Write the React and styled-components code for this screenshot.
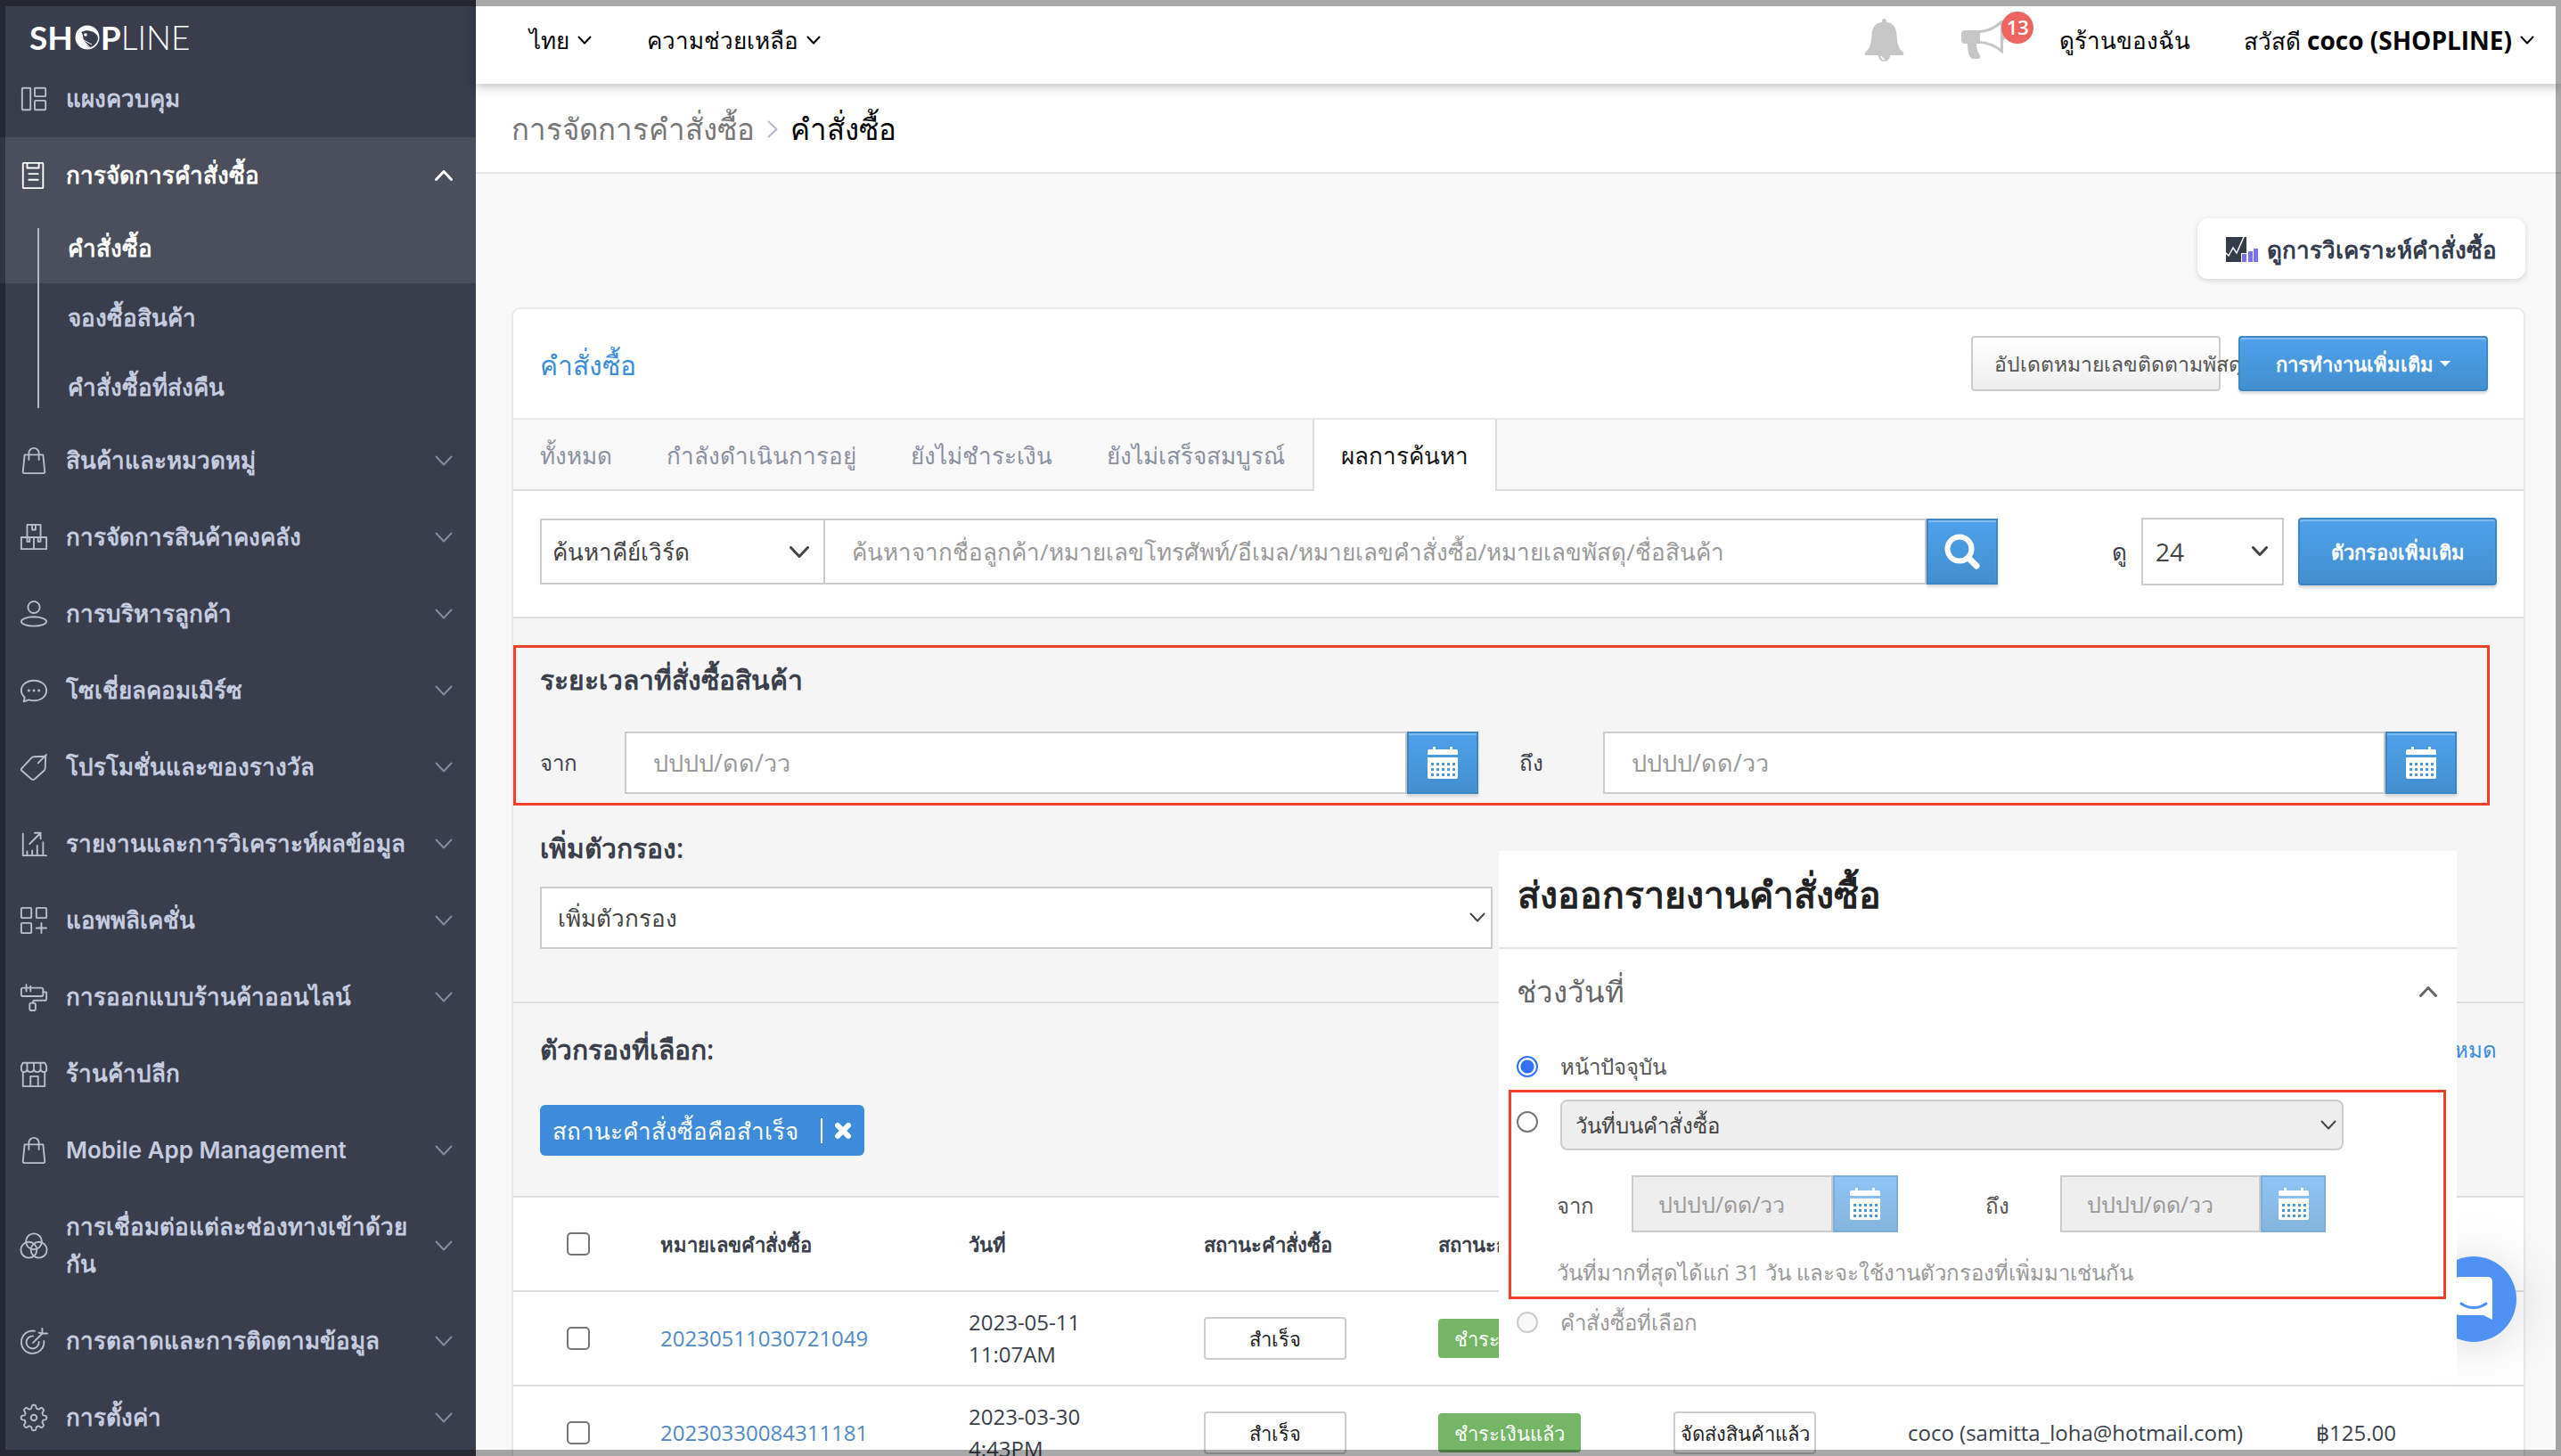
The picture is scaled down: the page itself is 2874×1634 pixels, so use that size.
import React from "react";
import styled, { createGlobalStyle, css } from "styled-components";

const GlobalStyle = createGlobalStyle`
  *, *::before, *::after { box-sizing: border-box; }
  body {
    margin: 0;
    background: #f8f8f8;
    color: #3a3f4b;
    font-family: "Open Sans", "Noto Sans", sans-serif;
    font-size: 24px;
    line-height: 36px;
  }
  button, input, select { font: inherit; color: inherit; margin: 0; }
  a { color: inherit; text-decoration: none; }
  h1, h2, h3, p { margin: 0; }
`;

const Shell = styled.div`
  position: relative;
  display: flex;
  height: 100vh;
  overflow: hidden;
`;

const WindowEdge = styled.div`
  position: absolute;
  inset: 0;
  border: 6px solid rgba(0, 0, 0, 0.34);
  border-width: 7px 6px;
  pointer-events: none;
  z-index: 10;
`;

/* ---------- icons ---------- */

const Stroke = styled.svg`
  flex: none;
  display: block;
  fill: none;
  stroke: currentColor;
  stroke-linecap: round;
  stroke-linejoin: round;
`;

function Chevron({ dir = "down", w = 20, h = 12, weight = 2 }) {
  const d = {
    down: `M1.5 1.5L${w / 2} ${h - 1.5}L${w - 1.5} 1.5`,
    up: `M1.5 ${h - 1.5}L${w / 2} 1.5L${w - 1.5} ${h - 1.5}`,
    right: `M1.5 1.5L${w - 1.5} ${h / 2}L1.5 ${h - 1.5}`,
  }[dir];
  return (
    <Stroke width={w} height={h} viewBox={`0 0 ${w} ${h}`} strokeWidth={weight} aria-hidden="true">
      <path d={d} />
    </Stroke>
  );
}

function gearPath() {
  const pts = [];
  for (let i = 0; i < 160; i++) {
    const a = (i / 160) * Math.PI * 2;
    const r = 13.2 + 2 * Math.tanh(2.2 * Math.cos(8 * a));
    pts.push(`${(16 + r * Math.cos(a)).toFixed(2)} ${(16 + r * Math.sin(a)).toFixed(2)}`);
  }
  return `M${pts.join("L")}Z`;
}

const menuShapes = {
  dashboard: (
    <>
      <rect x="2" y="3" width="10" height="26" rx="1" />
      <rect x="17" y="3" width="13" height="10" rx="1" />
      <rect x="17" y="18" width="13" height="11" rx="1" />
    </>
  ),
  orders: (
    <>
      <rect x="3" y="1" width="24" height="30" rx="1" />
      <path d="M8 1v6h14V1M10 14h11M10 21h11" />
    </>
  ),
  bag: (
    <>
      <path d="M5 9h22l2 20a1.5 1.5 0 0 1-1.500 2h-23A1.500 1.500 0 0 1 3 29z" />
      <path d="M10 15V7a6 6 0 0 1 12 0v8" />
    </>
  ),
  stock: (
    <>
      <path d="M8 16V1h16v15M1 16h30v14H1zM16 16v14M14 1v6h4V1M8 16v5h3v-5M21 16v5h3v-5" />
    </>
  ),
  person: (
    <>
      <circle cx="16" cy="8" r="7" />
      <ellipse cx="16" cy="25" rx="15" ry="5.500" />
    </>
  ),
  chat: (
    <>
      <path d="M5 24c-2.500-2.200-4-5-4-8C1 9 7.500 4 16 4s15 5 15 12-6.500 12-15 12c-2.500 0-4-.3-6-1l-6 2z" />
      <path d="M10 16h.1M16 16h.1M22 16h.1" strokeWidth="3" />
    </>
  ),
  tag: (
    <>
      <path d="M1 18L13 5c1-1 2-1.500 3-1.500L30 3l-.5 14c0 1-.5 2-1.200 3L17 30c-1.500 1-3 1-4 0L1.500 20c-.6-.7-.8-1.400-.5-2z" />
      <path d="M21 11L31 1" />
    </>
  ),
  report: (
    <>
      <path d="M3 4v26h28M8 30v-5M14 30v-6M20 30V18M27 30V14M11 16L24 3M17 3h7v7" />
    </>
  ),
  apps: (
    <>
      <rect x="1" y="1" width="12" height="12" rx="1" />
      <rect x="19" y="1" width="12" height="12" rx="1" />
      <rect x="1" y="19" width="12" height="12" rx="1" />
      <path d="M25 19v12M19 25h12" />
    </>
  ),
  roller: (
    <>
      <rect x="1" y="5" width="26" height="10" rx="2" />
      <path d="M7 1v8M12 3v6M27 10h4v8c0 1-.5 2-2 2H17c-1.500 0-2 .5-2 2v1" />
      <rect x="11" y="23" width="7" height="9" rx="2" />
    </>
  ),
  store: (
    <>
      <path d="M3 14v17h26V14M12 31V19h9v12M3 3h26l2 4v4c0 2-1 3-3 3s-3.500-1-4-3c-.5 2-2 3-4 3s-3.500-1-4-3c-.5 2-2 3-4 3s-3.500-1-4-3c-.5 2-2 3-3.500 3S1 13 1 11V7zM8 11V4M16 11V4M24 11V4" />
    </>
  ),
  venn: (
    <>
      <circle cx="16" cy="11" r="9.500" />
      <circle cx="10" cy="21" r="9.500" />
      <circle cx="22" cy="21" r="9.500" />
    </>
  ),
  target: (
    <>
      <path d="M17 4A13.500 13.500 0 1 0 28 16M15 10a7.500 7.500 0 1 0 7 7M15 18L26 7M26 7V1M26 7h6M26 7l-4-1" />
    </>
  ),
  gear: (
    <>
      <path d={gearPath()} />
      <circle cx="16" cy="16" r="3.500" />
    </>
  ),
};

function MenuIcon({ name }) {
  return (
    <Stroke width="32" height="32" viewBox="-1 -1 34 34" strokeWidth="2" aria-hidden="true">
      {menuShapes[name]}
    </Stroke>
  );
}

function CalendarIcon() {
  const holes = [];
  for (let r = 0; r < 3; r++)
    for (let c = 0; c < 5; c++)
      holes.push(<rect key={`${r}-${c}`} x={4 + c * 6} y={18 + r * 6} width="3" height="3" fill="#4a97dc" />);
  return (
    <svg width="34" height="36" viewBox="0 0 34 36" aria-hidden="true">
      <path fill="#fff" d="M6 0h3v3h16V0h3v3h4a2 2 0 0 1 2 2v4H0V5a2 2 0 0 1 2-2h4zM0 12h34v22a2 2 0 0 1-2 2H2a2 2 0 0 1-2-2z" />
      {holes}
    </svg>
  );
}

function SearchIcon() {
  return (
    <Stroke width="40" height="40" viewBox="0 0 40 40" strokeWidth="6" aria-hidden="true">
      <circle cx="17" cy="17" r="13.500" />
      <path d="M27 27l9 9" strokeWidth="7" />
    </Stroke>
  );
}

function BellIcon() {
  return (
    <svg width="45" height="48" viewBox="0 0 45 48" fill="#c6c6c6" aria-hidden="true">
      <path d="M22.500 0c1.800 0 2.600 1.500 2.600 3.800C33 5 36 10 36.500 18c.5 9 2 15 5.500 18 2.500 2 3.500 5 1 5H2c-2.500 0-1.500-3 1-5 3.500-3 5-9 5.500-18C9 10 12 5 19.900 3.800 19.900 1.500 20.700 0 22.500 0z" />
      <path d="M16 41h13c0 4-2.500 7-6.500 7S16 45 16 41z" />
      <path d="M19 42c.5 2 2 3.500 4 3.800" stroke="#fff" strokeWidth="1.500" fill="none" />
    </svg>
  );
}

function HornIcon() {
  return (
    <svg width="50" height="44" viewBox="0 0 50 44" fill="#c6c6c6" aria-hidden="true">
      <path d="M4 11h17v15H4c-3 0-4-2-4-4v-7c0-2 1-4 4-4z" />
      <path d="M21 12.500C31 12 39 7 45.500 1.500v33C39 29 31 25 21 24.500" fill="none" stroke="#c6c6c6" strokeWidth="3" />
      <path d="M46 14c3 0 4 2 4 4s-1 4-4 4zM7 26h10c0 5 1 9 4 13 1 3-1 4-4 4h-4c-4 0-6-8-6-17z" />
    </svg>
  );
}

function AnalyticsIcon() {
  return (
    <svg width="37" height="28" viewBox="0 0 37 28" aria-hidden="true">
      <path fill="#343c4a" d="M0 0h23v18h-6v10H0z" />
      <path d="M0 18l3 3 5-9 4 6 8-18" fill="none" stroke="#fff" strokeWidth="1.500" />
      <path fill="#7b70f3" d="M18 19h5v9h-5zM25 16h5v12h-5zM31 13h5v15h-5z" />
    </svg>
  );
}

/* ---------- sidebar ---------- */

const Sidebar = styled.aside`
  flex: none;
  width: 534px;
  background: #393d4c;
  color: #c5cce0;
  font-family: Inter, "Noto Sans", sans-serif;
  font-size: 26px;
  font-weight: 600;
  line-height: 42px;
`;

const Brand = styled.a`
  display: flex;
  align-items: center;
  height: 68px;
  padding: 16px 0 0 33px;
  color: #fff;
  font: 300 37px/52px Lato, sans-serif;
  & > svg { margin: 0 1px 0 2px; }
`;

const BrandStrong = styled.span`
  font-weight: 700;
`;

const MenuRow = styled.a`
  display: flex;
  align-items: center;
  min-height: 86px;
  padding: 22px 26px 22px 22px;
  color: ${(p) => (p.$active ? "#fff" : "inherit")};
  background: ${(p) => (p.$active ? "#4b4f5c" : "transparent")};
  & > svg:first-child { color: ${(p) => (p.$active ? "#fff" : "#b9bfcc")}; }
  & > svg:last-child { color: ${(p) => (p.$active ? "#fff" : "#858ca0")}; }
`;

const MenuText = styled.span`
  flex: 1;
  margin: 0 10px 0 20px;
`;

const SubMenu = styled.div`
  position: relative;
  &::before {
    content: "";
    position: absolute;
    left: 42px;
    top: 16px;
    bottom: 16px;
    width: 2px;
    background: #b4bac8;
  }
`;

const SubRow = styled.a`
  display: flex;
  align-items: center;
  height: 78px;
  padding-left: 76px;
  color: ${(p) => (p.$active ? "#fff" : "inherit")};
  background: ${(p) => (p.$active ? "#4b4f5c" : "transparent")};
`;

const menu = [
  ["bag", "สินค้าและหมวดหมู่", true],
  ["stock", "การจัดการสินค้าคงคลัง", true],
  ["person", "การบริหารลูกค้า", true],
  ["chat", "โซเชี่ยลคอมเมิร์ซ", true],
  ["tag", "โปรโมชั่นและของรางวัล", true],
  ["report", "รายงานและการวิเคราะห์ผลข้อมูล", true],
  ["apps", "แอพพลิเคชั่น", true],
  ["roller", "การออกแบบร้านค้าออนไลน์", true],
  ["store", "ร้านค้าปลีก", false],
  ["bag", "Mobile App Management", true],
  ["venn", "การเชื่อมต่อแต่ละช่องทางเข้าด้วยกัน", true],
  ["target", "การตลาดและการติดตามข้อมูล", true],
  ["gear", "การตั้งค่า", true],
];

function SideMenu() {
  return (
    <Sidebar>
      <Brand href="#" aria-label="SHOPLINE">
        <BrandStrong>SH</BrandStrong>
        <svg width="28" height="28" viewBox="0 0 28 28" aria-hidden="true">
          <circle cx="14" cy="14" r="13.500" fill="#fff" />
          <path d="M7 8c5-2 8-2 11-1 4 1 8 4 8 8-.5 5-4 9-9.500 10.500-3-3-6-6-7-10C9 12 9 10 7 8z" fill="#393d4c" />
          <circle cx="12" cy="11" r="1.800" fill="#fff" />
          <path d="M10 17l9 5M10 18l7 7M10 19l4 7" stroke="#fff" strokeWidth="1" />
        </svg>
        <BrandStrong>P</BrandStrong>
        <span>LINE</span>
      </Brand>
      <nav>
        <MenuRow href="#"><MenuIcon name="dashboard" /><MenuText>แผงควบคุม</MenuText></MenuRow>
        <MenuRow href="#" $active><MenuIcon name="orders" /><MenuText>การจัดการคำสั่งซื้อ</MenuText><Chevron dir="up" weight={3} /></MenuRow>
        <SubMenu>
          <SubRow href="#" $active>คำสั่งซื้อ</SubRow>
          <SubRow href="#">จองซื้อสินค้า</SubRow>
          <SubRow href="#">คำสั่งซื้อที่ส่งคืน</SubRow>
        </SubMenu>
        {menu.map(([icon, label, opens]) => (
          <MenuRow href="#" key={label}>
            <MenuIcon name={icon} />
            <MenuText>{label}</MenuText>
            {opens && <Chevron />}
          </MenuRow>
        ))}
      </nav>
    </Sidebar>
  );
}

/* ---------- top bars ---------- */

const Main = styled.main`
  position: relative;
  flex: 1;
  min-width: 0;
`;

const TopBar = styled.header`
  position: relative;
  z-index: 1;
  display: flex;
  align-items: center;
  height: 94px;
  padding: 0 30px 4px 60px;
  background: #fff;
  box-shadow: 0 2px 12px rgba(0, 0, 0, 0.3);
  color: #000;
  font-size: 26px;
  font-weight: 500;
`;

const TopLink = styled.button`
  display: flex;
  align-items: center;
  gap: 9px;
  padding: 0;
  border: 0;
  background: none;
  white-space: nowrap;
  margin-left: ${(p) => p.$before || 0}px;
`;

const UserName = styled.b`
  font-size: 28px;
  font-weight: 700;
`;

const Spacer = styled.div`
  flex: 1;
`;

const IconButton = styled.button`
  position: relative;
  display: block;
  padding: 0;
  border: 0;
  background: none;
  line-height: 0;
  margin-right: ${(p) => p.$after}px;
`;

const Badge = styled.span`
  position: absolute;
  left: 45px;
  top: -10px;
  width: 36px;
  height: 36px;
  border-radius: 50%;
  background: #ec6561;
  color: #fff;
  font: 600 22px/34px "Open Sans", sans-serif;
  text-align: center;
`;

const Crumbs = styled.nav`
  display: flex;
  align-items: center;
  gap: 14px;
  height: 101px;
  padding: 2px 40px 0;
  background: #fff;
  border-bottom: 2px solid #e7e7e7;
  color: #777;
  font-size: 33px;
  line-height: 50px;
  & > svg { color: #b4bacb; }
`;

const CurrentCrumb = styled.strong`
  font-weight: 500;
  color: #000;
`;

/* ---------- order card ---------- */

const Content = styled.div`
  padding: 50px 40px;
`;

const AnalyticsButton = styled.button`
  display: flex;
  align-items: center;
  gap: 9px;
  height: 68px;
  margin: 0 0 32px auto;
  padding: 2px 32px 0;
  border: 0;
  border-radius: 12px;
  background: #fff;
  box-shadow: 0 2px 6px rgba(0, 0, 0, 0.14);
  color: #343c4e;
  font-size: 26px;
  font-weight: 600;
`;

const Card = styled.section`
  border: 2px solid #e7e7e7;
  border-radius: 10px;
  background: #fff;
`;

const CardHead = styled.div`
  display: flex;
  align-items: center;
  gap: 20px;
  height: 122px;
  padding: 0 40px 0 30px;
`;

const CardTitle = styled.h1`
  flex: 1;
  padding-top: 4px;
  color: #3b8cdb;
  font-size: 30px;
  font-weight: 500;
  line-height: 44px;
`;

const blueFace = css`
  border: 2px solid #3d86c6;
  background: linear-gradient(#4fa1eb, #428fce);
  box-shadow: inset 0 2px 1px rgba(255, 255, 255, 0.3), 0 3px 3px rgba(0, 0, 0, 0.14);
  color: #fff;
`;

const ActionButton = styled.button`
  position: relative;
  display: flex;
  align-items: center;
  justify-content: ${(p) => (p.$primary ? "center" : "flex-start")};
  gap: 7px;
  width: ${(p) => p.$width}px;
  height: ${(p) => p.$height}px;
  padding: 0 ${(p) => (p.$primary ? 10 : 24)}px;
  border: 2px solid #ccc;
  border-radius: 4px;
  background: linear-gradient(#fff, #eee);
  color: #555;
  font-size: 23px;
  white-space: nowrap;
  ${(p) =>
    p.$primary &&
    css`
      ${blueFace}
      font-size: 22px;
      font-weight: 600;
    `}
`;

const Caret = styled.span`
  border: 6px solid transparent;
  border-top-color: currentColor;
  border-bottom: 0;
`;

const Tabs = styled.div`
  display: flex;
  gap: 1px;
  height: 82px;
  border-top: 2px solid #e7e7e7;
  background: linear-gradient(#ddd, #ddd) bottom / 100% 2px no-repeat #f8f8f8;
`;

const Tab = styled.button`
  padding: 0 30px;
  border: 0;
  background: none;
  color: #8b90a0;
  font-size: 26px;
  font-weight: 500;
  white-space: nowrap;
  ${(p) =>
    p.$on &&
    css`
      border: solid #ddd;
      border-width: 0 2px;
      background: #fff;
      color: #111;
    `}
`;

const SearchRow = styled.form`
  display: flex;
  align-items: center;
  height: 143px;
  padding: 0 30px 6px;
  border-bottom: 2px solid #ddd;
`;

const Group = styled.div`
  display: flex;
  flex: 1;
  min-width: 0;
  height: ${(p) => p.$height}px;
`;

const SelectBox = styled.span`
  position: relative;
  display: block;
  flex: ${(p) => (p.$width ? "none" : 1)};
  width: ${(p) => (p.$width ? `${p.$width}px` : "auto")};
  height: ${(p) => p.$height}px;
  color: #444;
  & > svg {
    position: absolute;
    right: ${(p) => p.$inset || 8}px;
    top: calc(50% - 6px);
    pointer-events: none;
  }
`;

const Select = styled.select`
  appearance: none;
  width: 100%;
  height: 100%;
  padding: 0 ${(p) => p.$pad || 12}px;
  border: 2px solid #ccc;
  border-radius: ${(p) => (p.$off ? 8 : 0)}px;
  background: ${(p) => (p.$off ? "#eee" : "#fff")};
  color: inherit;
  font-size: ${(p) => p.$size || 26}px;
  font-weight: ${(p) => p.$weight || 400};
  opacity: 1;
`;

const TextInput = styled.input`
  flex: 1;
  min-width: 0;
  margin-left: ${(p) => (p.$joined ? -2 : 0)}px;
  padding: 0 ${(p) => p.$pad || 30}px;
  border: 2px solid #ccc;
  border-radius: 0;
  background: ${(p) => (p.disabled ? "#eee" : "#fff")};
  font-size: ${(p) => p.$size || 26}px;
  &::placeholder { color: #999; opacity: 1; }
`;

const AddonButton = styled.button`
  display: flex;
  align-items: center;
  justify-content: center;
  flex: none;
  width: ${(p) => p.$width || 80}px;
  padding: 0;
  ${blueFace}
  ${(p) =>
    p.disabled &&
    css`
      border-color: #7fabd8;
      background: linear-gradient(#8fc4f5, #84b5dd);
      box-shadow: none;
    `}
`;

const PerPage = styled.label`
  display: flex;
  align-items: center;
  gap: 16px;
  margin: 0 16px 0 128px;
  font-size: 26px;
`;

const FilterArea = styled.div`
  padding: 30px 0 0;
  height: ${(p) => p.$height}px;
  background: #f5f5f5;
  border-bottom: 2px solid #ddd;
`;

const FilterBlock = styled.div`
  padding: 0 30px;
`;

const Highlight = styled.div`
  border: 3px solid #ee4026;
`;

const DateRange = styled(Highlight)`
  height: 180px;
  margin-right: 38px;
  padding: 14px 34px 0 27px;
`;

const FilterTitle = styled.h2`
  font-size: 30px;
  font-weight: 600;
  line-height: 44px;
`;

const DateFields = styled.div`
  display: flex;
  align-items: center;
  margin-top: 36px;
`;

const DateLabel = styled.label`
  flex: none;
  width: ${(p) => p.$width}px;
  margin-left: ${(p) => p.$before || 0}px;
`;

const Chosen = styled.div`
  display: flex;
  justify-content: space-between;
  align-items: center;
`;

const BlueLink = styled.a`
  color: ${(p) => (p.$soft ? "#5089c6" : "#3b8cdb")};
`;

const FilterTag = styled.span`
  display: inline-flex;
  align-items: center;
  height: 57px;
  margin-top: 40px;
  padding: 0 14px;
  border-radius: 6px;
  background: #3e8cd9;
  color: #fff;
  font-size: 26px;
`;

const TagClose = styled.button`
  display: flex;
  align-items: center;
  height: 28px;
  margin-left: 25px;
  padding: 0 0 0 13px;
  border: 0;
  border-left: 2px solid #fff;
  background: none;
`;

const Table = styled.table`
  width: 100%;
  table-layout: fixed;
  border-collapse: separate;
  border-spacing: 0;
  th, td {
    height: 106px;
    padding: 0;
    border-bottom: 2px solid #ddd;
    text-align: left;
    white-space: nowrap;
  }
  th { font-size: 22px; font-weight: 600; }
  th:first-child, td:first-child { padding-left: 60px; }
`;

const Check = styled.input`
  appearance: none;
  display: block;
  width: 26px;
  height: 26px;
  border: 2px solid #767676;
  border-radius: 5px;
  background: #fff;
`;

const Status = styled.span`
  display: flex;
  align-items: center;
  justify-content: center;
  width: 160px;
  height: ${(p) => (p.$paid ? 44 : 48)}px;
  border: 2px solid ${(p) => (p.$paid ? "#74b566" : "#ccc")};
  border-radius: 4px;
  background: ${(p) => (p.$paid ? "#74b566" : "#fff")};
  color: ${(p) => (p.$paid ? "#fff" : "#222")};
  font-size: 22px;
  font-weight: 500;
`;

/* ---------- export panel ---------- */

const ExportPanel = styled.section`
  position: absolute;
  top: 955px;
  right: 117px;
  z-index: 3;
  width: 1075px;
  padding-bottom: 37px;
  background: #fff;
  color: #555;
`;

const PanelTitle = styled.h2`
  height: 110px;
  padding: 18px 21px 0;
  border-bottom: 2px solid #e4e4e4;
  color: #222;
  font-size: 41px;
  font-weight: 600;
  line-height: 60px;
`;

const PanelSection = styled.button`
  display: flex;
  align-items: center;
  justify-content: space-between;
  width: 100%;
  height: 100px;
  padding: 0 22px 4px 20px;
  border: 0;
  background: none;
  color: #666;
  font-size: 33px;
`;

const Option = styled.label`
  display: flex;
  align-items: center;
  gap: 25px;
  height: ${(p) => p.$height}px;
  padding: ${(p) => p.$top || 0}px 20px 0;
  color: ${(p) => (p.$off ? "#999" : "inherit")};
`;

const Radio = styled.input`
  appearance: none;
  flex: none;
  width: 24px;
  height: 24px;
  border: 2px solid #767676;
  border-radius: 50%;
  background: #fff;
  &:checked { border-color: #2f72f5; background: radial-gradient(#2f72f5 7px, #fff 8px); }
  &:disabled { border-color: #ccc; background: #f8f8f8; }
`;

const PanelHighlight = styled(Highlight)`
  height: 235px;
  margin: 0 12px 0 11px;
  padding: 8px 112px 0 6px;
`;

const PanelRow = styled.div`
  display: flex;
  align-items: flex-start;
  gap: 25px;
  & > input { margin-top: 13px; }
`;

const PanelDates = styled.div`
  display: flex;
  align-items: center;
  margin: 28px 20px 0 45px;
  & > label { padding-top: 4px; }
`;

const Hint = styled.p`
  margin: 27px 0 0 45px;
  color: #999;
  white-space: nowrap;
`;

const ChatButton = styled.button`
  position: absolute;
  top: 1410px;
  right: 50px;
  z-index: 2;
  display: flex;
  align-items: center;
  justify-content: center;
  width: 96px;
  height: 96px;
  padding: 0;
  border: 0;
  border-radius: 50%;
  background: #4f92f4;
  box-shadow: 0 4px 60px rgba(0, 0, 0, 0.16);
`;

const orders = [
  ["20230511030721049", "2023-05-11", "11:07AM"],
  ["20230330084311181", "2023-03-30", "4:43PM"],
];

const columns = [165, 346, 264, 263, 264, 263, 458];

function DateInput({ id, disabled, height = 70, pad, size = 27, button }) {
  return (
    <Group $height={height}>
      <TextInput id={id} placeholder="ปปปป/ดด/วว" disabled={disabled} $pad={pad} $size={size} />
      <AddonButton type="button" aria-label="ปฏิทิน" disabled={disabled} $width={button}>
        <CalendarIcon />
      </AddonButton>
    </Group>
  );
}

function OrderTable() {
  return (
    <Table>
      <colgroup>
        {columns.map((w, i) => <col key={i} width={w} />)}
        <col />
      </colgroup>
      <thead>
        <tr>
          <th><Check type="checkbox" aria-label="เลือกทั้งหมด" /></th>
          <th>หมายเลขคำสั่งซื้อ</th>
          <th>วันที่</th>
          <th>สถานะคำสั่งซื้อ</th>
          <th>สถานะการชำระเงิน</th>
          <th>สถานะการจัดส่ง</th>
          <th>ลูกค้า</th>
          <th>ยอดรวม</th>
        </tr>
      </thead>
      <tbody>
        {orders.map(([no, day, time]) => (
          <tr key={no}>
            <td><Check type="checkbox" aria-label={no} /></td>
            <td><BlueLink href="#" $soft>{no}</BlueLink></td>
            <td>{day}<br />{time}</td>
            <td><Status>สำเร็จ</Status></td>
            <td><Status $paid>ชำระเงินแล้ว</Status></td>
            <td><Status>จัดส่งสินค้าแล้ว</Status></td>
            <td>coco (samitta_loha@hotmail.com)</td>
            <td>฿125.00</td>
          </tr>
        ))}
      </tbody>
    </Table>
  );
}

const AddFilterLabel = styled.label`
  display: block;
  margin: 26px 0 21px;
  font-size: 30px;
  font-weight: 600;
  line-height: 44px;
`;

function AddFilter() {
  return (
    <>
      <AddFilterLabel htmlFor="add-filter">เพิ่มตัวกรอง:</AddFilterLabel>
      <SelectBox $width={1069} $height={70}>
        <Select id="add-filter" $pad={18}><option>เพิ่มตัวกรอง</option></Select>
        <Chevron w={18} h={11} />
      </SelectBox>
    </>
  );
}

function Export() {
  return (
    <ExportPanel>
      <PanelTitle>ส่งออกรายงานคำสั่งซื้อ</PanelTitle>
      <PanelSection type="button">ช่วงวันที่<Chevron dir="up" weight={3} /></PanelSection>
      <Option $height={58} $top={6}>
        <Radio type="radio" name="range" defaultChecked />หน้าปัจจุบัน
      </Option>
      <PanelHighlight>
        <PanelRow>
          <Radio type="radio" name="range" aria-label="วันที่บนคำสั่งซื้อ" />
          <SelectBox $height={57}>
            <Select disabled $off $pad={15} $size={24} $weight={500} aria-label="ประเภทวันที่">
              <option>วันที่บนคำสั่งซื้อ</option>
            </Select>
            <Chevron w={18} h={11} />
          </SelectBox>
        </PanelRow>
        <PanelDates>
          <DateLabel htmlFor="export-from" $width={84}>จาก</DateLabel>
          <DateInput id="export-from" disabled height={64} pad={28} size={25} button={73} />
          <DateLabel htmlFor="export-to" $width={84} $before={98}>ถึง</DateLabel>
          <DateInput id="export-to" disabled height={64} pad={28} size={25} button={73} />
        </PanelDates>
        <Hint>วันที่มากที่สุดได้แก่ 31 วัน และจะใช้งานตัวกรองที่เพิ่มมาเช่นกัน</Hint>
      </PanelHighlight>
      <Option $height={52} $off>
        <Radio type="radio" name="range" disabled />คำสั่งซื้อที่เลือก
      </Option>
    </ExportPanel>
  );
}

export default function App() {
  return (
    <Shell>
      <GlobalStyle />
      <SideMenu />
      <Main>
        <TopBar>
          <TopLink>ไทย<Chevron w={16} h={10} /></TopLink>
          <TopLink $before={62}>ความช่วยเหลือ<Chevron w={16} h={10} /></TopLink>
          <Spacer />
          <IconButton $after={64} aria-label="การแจ้งเตือน"><BellIcon /></IconButton>
          <IconButton $after={60} aria-label="ประกาศ"><HornIcon /><Badge>13</Badge></IconButton>
          <TopLink>ดูร้านของฉัน</TopLink>
          <TopLink $before={60}><span>สวัสดี <UserName>coco (SHOPLINE)</UserName></span><Chevron w={16} h={10} /></TopLink>
        </TopBar>
        <Crumbs>
          <a href="#">การจัดการคำสั่งซื้อ</a>
          <Chevron dir="right" w={12} h={20} />
          <CurrentCrumb>คำสั่งซื้อ</CurrentCrumb>
        </Crumbs>
        <Content>
          <AnalyticsButton><AnalyticsIcon />ดูการวิเคราะห์คำสั่งซื้อ</AnalyticsButton>
          <Card>
            <CardHead>
              <CardTitle>คำสั่งซื้อ</CardTitle>
              <ActionButton $width={280} $height={62}>อัปเดตหมายเลขติดตามพัสดุ</ActionButton>
              <ActionButton $primary $width={280} $height={62}>การทำงานเพิ่มเติม<Caret /></ActionButton>
            </CardHead>
            <Tabs>
              <Tab>ทั้งหมด</Tab>
              <Tab>กำลังดำเนินการอยู่</Tab>
              <Tab>ยังไม่ชำระเงิน</Tab>
              <Tab>ยังไม่เสร็จสมบูรณ์</Tab>
              <Tab $on>ผลการค้นหา</Tab>
            </Tabs>
            <SearchRow onSubmit={(e) => e.preventDefault()}>
              <Group $height={74}>
                <SelectBox $width={320} $height={74} $inset={18}>
                  <Select $weight={500} aria-label="ประเภทการค้นหา"><option>ค้นหาคีย์เวิร์ด</option></Select>
                  <Chevron w={22} h={13} weight={3} />
                </SelectBox>
                <TextInput $joined aria-label="ค้นหา" placeholder="ค้นหาจากชื่อลูกค้า/หมายเลขโทรศัพท์/อีเมล/หมายเลขคำสั่งซื้อ/หมายเลขพัสดุ/ชื่อสินค้า" />
                <AddonButton aria-label="ค้นหา"><SearchIcon /></AddonButton>
              </Group>
              <PerPage>
                ดู
                <SelectBox $width={160} $height={76} $inset={18}>
                  <Select $size={28} $pad={14}><option>24</option></Select>
                  <Chevron w={18} h={11} weight={3} />
                </SelectBox>
              </PerPage>
              <ActionButton type="button" $primary $width={223} $height={76}>ตัวกรองเพิ่มเติม</ActionButton>
            </SearchRow>
            <FilterArea $height={432}>
              <DateRange>
                <FilterTitle>ระยะเวลาที่สั่งซื้อสินค้า</FilterTitle>
                <DateFields>
                  <DateLabel htmlFor="from" $width={95}>จาก</DateLabel>
                  <DateInput id="from" />
                  <DateLabel htmlFor="to" $width={94} $before={46}>ถึง</DateLabel>
                  <DateInput id="to" />
                </DateFields>
              </DateRange>
              <FilterBlock>
                <AddFilter />
              </FilterBlock>
            </FilterArea>
            <FilterArea $height={218}>
              <FilterBlock>
                <Chosen>
                  <FilterTitle>ตัวกรองที่เลือก:</FilterTitle>
                  <BlueLink href="#">ล้างทั้งหมด</BlueLink>
                </Chosen>
                <FilterTag>
                  สถานะคำสั่งซื้อคือสำเร็จ
                  <TagClose aria-label="ลบตัวกรอง">
                    <Stroke width="20" height="20" viewBox="0 0 20 20" strokeWidth="6" aria-hidden="true">
                      <path d="M4 4l12 12M16 4L4 16" />
                    </Stroke>
                  </TagClose>
                </FilterTag>
              </FilterBlock>
            </FilterArea>
            <OrderTable />
          </Card>
        </Content>
        <ChatButton aria-label="แชท">
          <svg width="42" height="50" viewBox="0 0 42 50" aria-hidden="true">
            <path d="M5 0h32a5 5 0 0 1 5 5v43l-10-5H5a5 5 0 0 1-5-5V5a5 5 0 0 1 5-5z" fill="#fff" />
            <path d="M7 30c8 6 20 6 28 0" fill="none" stroke="#4f92f4" strokeWidth="3" strokeLinecap="round" />
          </svg>
        </ChatButton>
        <Export />
      </Main>
      <WindowEdge />
    </Shell>
  );
}
